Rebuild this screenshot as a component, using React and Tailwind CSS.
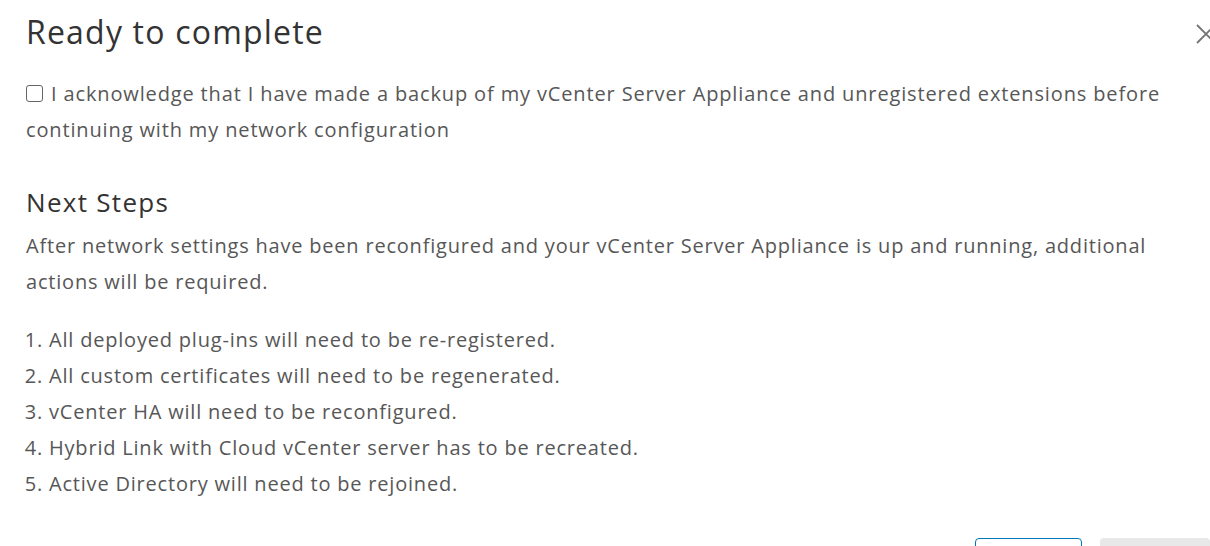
export default function App() {
  return (
    <div className="relative w-[1210px] h-[546px] overflow-hidden bg-white" style={{ fontFamily: '"Open Sans", "Noto Sans", sans-serif' }}>
      <button className="absolute left-[1195px] top-[23px]" aria-label="close">
        <svg width="22" height="22" viewBox="0 0 22 22"><path d="M2 2 L20 20 M20 2 L2 20" stroke="#747474" strokeWidth="1.8" fill="none" /></svg>
      </button>
      <div className="pl-[26px] pr-[40px]">
        <h1 className="pt-[10px] text-[32px] leading-[44px] text-[#333] font-normal tracking-[1.2px]">Ready to complete</h1>
        <div className="mt-[22px] text-[20px] leading-[36px] text-[#575757] tracking-[0.86px]">
          <span className="inline-block w-[17px] h-[17px] border border-[#666] rounded-[3px] align-[-1px] mr-[8px]"></span>
          I acknowledge that I have made a backup of my vCenter Server Appliance and unregistered extensions before continuing with my network configuration
        </div>
        <h2 className="mt-[36px] text-[26px] leading-[36px] text-[#333] font-normal tracking-[1.3px]">Next Steps</h2>
        <p className="mt-[8px] text-[20px] leading-[36px] text-[#575757] tracking-[0.8px]">After network settings have been reconfigured and your vCenter Server Appliance is up and running, additional actions will be required.</p>
        <ol className="mt-[22px] list-decimal pl-[23px] text-[20px] leading-[36px] text-[#575757] tracking-[0.8px]">
          <li>All deployed plug-ins will need to be re-registered.</li>
          <li>All custom certificates will need to be regenerated.</li>
          <li>vCenter HA will need to be reconfigured.</li>
          <li>Hybrid Link with Cloud vCenter server has to be recreated.</li>
          <li>Active Directory will need to be rejoined.</li>
        </ol>
      </div>
      <div className="absolute left-[975px] top-[538px] w-[107px] h-[40px] border border-[#0079b8] rounded-[4px]"></div>
      <div className="absolute left-[1100px] top-[538px] w-[110px] h-[40px] bg-[#e8e8e8] rounded-[4px]"></div>
    </div>
  );
}
